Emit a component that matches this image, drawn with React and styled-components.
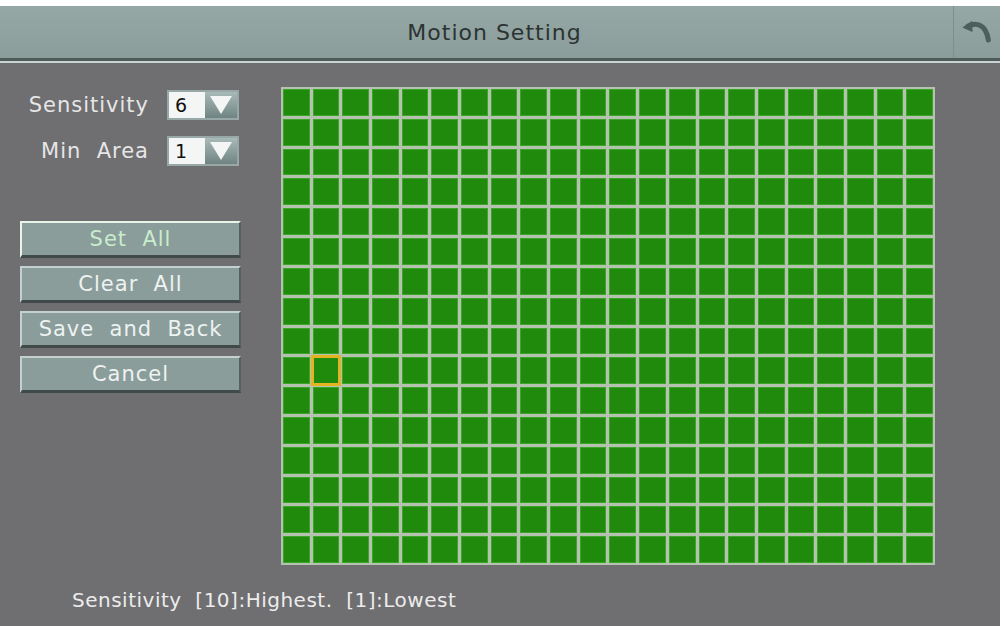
import React from 'react';
import styled, { createGlobalStyle } from 'styled-components';

const Global = createGlobalStyle`
  body { margin: 0; background: #fff; font-family: "DejaVu Sans", "Liberation Sans", sans-serif; }
`;

const COLS = 22;
const ROWS = 16;
const SEL = { r: 9, c: 1 };

export default function App() {
  const cells = [];
  for (let r = 0; r < ROWS; r++)
    for (let c = 0; c < COLS; c++)
      cells.push(<Cell key={r * COLS + c} selected={r === SEL.r && c === SEL.c} />);

  return (
    <>
      <Global />
      <Screen>
        <Header>
          <Title>Motion Setting</Title>
          <BackButton>
            <svg width="34" height="34" viewBox="0 0 30 30">
              <path d="M7 10 C14 6, 23 8, 25 22" fill="none" stroke="#4e5e5c" strokeWidth="4.5" strokeLinecap="round" />
              <path d="M2 11 L11 5 L11 15 Z" fill="#4e5e5c" />
            </svg>
          </BackButton>
        </Header>
        <Body>
          <Side>
            <Field>
              <Label>Sensitivity</Label>
              <Select><Value>6</Value><Arrow /></Select>
            </Field>
            <Field>
              <Label>Min&nbsp; Area</Label>
              <Select><Value>1</Value><Arrow /></Select>
            </Field>
            <Buttons>
              <Btn active>Set&nbsp; All</Btn>
              <Btn>Clear&nbsp; All</Btn>
              <Btn>Save&nbsp; and&nbsp; Back</Btn>
              <Btn>Cancel</Btn>
            </Buttons>
          </Side>
          <Grid>{cells}</Grid>
        </Body>
        <Footer>Sensitivity&nbsp; [10]:Highest.&nbsp; [1]:Lowest</Footer>
      </Screen>
    </>
  );
}

const Screen = styled.div`
  width: 1000px;
  height: 620px;
  margin-top: 6px;
  background: #6f6e71;
  display: flex;
  flex-direction: column;
`;

const Header = styled.div`
  height: 52px;
  background: linear-gradient(#95a8a5, #8a9d9a);
  border-bottom: 3px solid #4f5b59;
  box-shadow: 0 2px 0 #c9d4d2;
  display: flex;
  align-items: center;
`;

const Title = styled.div`
  flex: 1;
  text-align: center;
  font-size: 22px;
  letter-spacing: 1px;
  color: #2c3332;
  padding-left: 36px;
`;

const BackButton = styled.div`
  width: 46px;
  height: 52px;
  border-left: 1px solid #7d8f8c;
  display: flex;
  align-items: center;
  justify-content: center;
`;

const Body = styled.div`
  flex: 1;
  display: flex;
  padding: 24px 0 0 18px;
  gap: 40px;
`;

const Side = styled.div`
  width: 223px;
  display: flex;
  flex-direction: column;
  padding-top: 5px;
`;

const Field = styled.div`
  display: flex;
  align-items: center;
  justify-content: flex-end;
  gap: 18px;
  height: 30px;
  margin-bottom: 16px;
  padding-right: 2px;
  &:nth-child(2) { margin-bottom: 0; }
`;

const Label = styled.span`
  color: #e6e6e6;
  font-size: 21px;
  letter-spacing: 1px;
`;

const Select = styled.div`
  width: 72px;
  height: 30px;
  display: flex;
  background: #f4f6f6;
  border: 2px solid #98a8a6;
  box-sizing: border-box;
`;

const Value = styled.span`
  flex: 1;
  font-size: 19px;
  color: #111;
  padding-left: 6px;
  line-height: 26px;
`;

const Arrow = styled.div`
  width: 32px;
  background: linear-gradient(#a9bab8, #6f8482);
  position: relative;
  &::after {
    content: '';
    position: absolute;
    left: 5px;
    top: 4px;
    border-left: 11px solid transparent;
    border-right: 11px solid transparent;
    border-top: 18px solid #f4f6f6;
  }
`;

const Buttons = styled.div`
  display: flex;
  flex-direction: column;
  gap: 8px;
  margin-top: 55px;
  margin-left: 2px;
`;

const Btn = styled.div`
  height: 37px;
  box-sizing: border-box;
  background: #8a9d9b;
  border-top: 2px solid ${p => (p.active ? '#e8f4e6' : '#c4d0ce')};
  border-left: 2px solid ${p => (p.active ? '#e8f4e6' : '#c4d0ce')};
  border-bottom: 3px solid #404a49;
  border-right: 2px solid #56625f;
  color: ${p => (p.active ? '#c9eccd' : '#eef2f1')};
  font-size: 21px;
  letter-spacing: 1px;
  display: flex;
  align-items: center;
  justify-content: center;
`;

const Grid = styled.div`
  width: 654px;
  height: 478px;
  margin-top: 2px;
  box-sizing: border-box;
  background: #b5c2b0;
  padding: 2px;
  display: grid;
  grid-template-columns: repeat(${COLS}, 1fr);
  grid-template-rows: repeat(${ROWS}, 1fr);
  gap: 3px;
`;

const Cell = styled.div`
  background: #1f8a0b;
  box-shadow: inset 0 0 0 1px #3aa526;
  outline: ${p => (p.selected ? '3px solid #e3b420' : 'none')};
  outline-offset: -1px;
  position: relative;
  z-index: ${p => (p.selected ? 1 : 0)};
`;

const Footer = styled.div`
  height: 52px;
  padding-left: 72px;
  color: #ececec;
  font-size: 20px;
  letter-spacing: 0.5px;
  display: flex;
  align-items: center;
`;
